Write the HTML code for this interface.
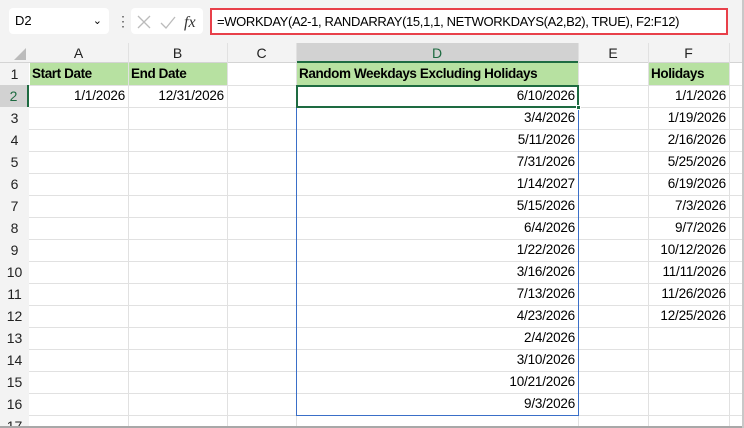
<!DOCTYPE html><html style="overflow:hidden"><head><style>
*{margin:0;padding:0;box-sizing:border-box}
html,body{width:744px;height:428px;overflow:hidden}
body{background:#fff;font-family:"Liberation Sans",Arial,sans-serif;position:relative}
.a{position:absolute}
.top{left:0;top:0;width:744px;height:43px;background:#f3f3f3}
.c{position:absolute;font-size:13.5px;line-height:22px;white-space:nowrap;letter-spacing:-0.2px}
.r{text-align:right;padding-right:3px}
.h{font-weight:bold;background:#b7e1a1;padding-left:2px;letter-spacing:-0.4px}
.hl{position:absolute;left:0;width:744px;height:1px;background:#e1e1e1}
.vl{position:absolute;top:43px;width:1px;height:383px;background:#e1e1e1}
.rh{position:absolute;left:0;width:29px;text-align:center;font-size:14px;line-height:22px;background:#f3f3f3;color:#222;overflow:hidden}
.ch{position:absolute;top:43px;height:20px;text-align:center;font-size:14px;line-height:20px;color:#222}
</style></head><body>
<div class="a top"></div>
<div class="a" style="left:9px;top:8px;width:100px;height:26px;background:#fff;border-radius:4px;font-size:13px;line-height:26px;padding-left:6px">D2<span style="position:absolute;right:7px;top:0;font-size:11px">&#8964;</span></div>
<div class="a" style="left:116px;top:13px;font-size:14px;color:#555">&#8942;</div>
<div class="a" style="left:131px;top:8px;width:72px;height:26px;background:#fff;border-radius:4px"></div>
<svg class="a" style="left:135px;top:13px" width="70" height="18"><path d="M3 3l12 12M15 3L3 15" stroke="#bbb" stroke-width="1.3" fill="none"/><path d="M26 10l5 5 9-11" stroke="#bbb" stroke-width="1.3" fill="none"/><text x="49" y="14" font-family="Liberation Serif" font-style="italic" font-size="16" fill="#333">fx</text></svg>
<div class="a" style="left:210px;top:8px;width:518px;height:27px;background:#fff;border:2px solid #e8404a;font-size:13px;line-height:23px;padding-left:5px;white-space:nowrap;overflow:hidden;letter-spacing:-0.35px">=WORKDAY(A2-1, RANDARRAY(15,1,1, NETWORKDAYS(A2,B2), TRUE), F2:F12)</div>
<div class="a" style="left:0;top:43px;width:744px;height:20px;background:#f3f3f3;border-bottom:1px solid #d4d4d4"></div>
<div class="a" style="left:0;top:63px;width:29px;height:363px;background:#f3f3f3;border-right:1px solid #d4d4d4"></div>
<div class="a" style="left:296px;top:43px;width:282px;height:20px;background:#d2d2d2;border-bottom:2px solid #1e6b41"></div>
<svg class="a" style="left:14px;top:48px" width="12" height="12"><path d="M12 0V12H0z" fill="#bbb"/></svg>
<div class="ch" style="left:29px;width:99px">A</div><div class="ch" style="left:128px;width:99px">B</div><div class="ch" style="left:227px;width:69px">C</div><div class="ch" style="left:296px;width:282px;color:#1e6b41">D</div><div class="ch" style="left:578px;width:70px">E</div><div class="ch" style="left:648px;width:81px">F</div>
<div id="g"></div>
<script>
let s='';
for(let i=1;i<=17;i++){let y=63+22*(i-1);let h=i==17?11:22;s+=`<div class="hl" style="top:${y+22}px;${i==17?'display:none':''}"></div><div class="rh" style="top:${y}px;height:${h}px;${i==2?'background:#d2d2d2;color:#1e6b41;border-right:2px solid #1e6b41':''}">${i}</div>`;}
[128,227,296,578,648,729].forEach(x=>s+=`<div class="vl" style="left:${x}px"></div>`);
const D=['6/10/2026','3/4/2026','5/11/2026','7/31/2026','1/14/2027','5/15/2026','6/4/2026','1/22/2026','3/16/2026','7/13/2026','4/23/2026','2/4/2026','3/10/2026','10/21/2026','9/3/2026'];
const F=['1/1/2026','1/19/2026','2/16/2026','5/25/2026','6/19/2026','7/3/2026','9/7/2026','10/12/2026','11/11/2026','11/26/2026','12/25/2026'];
D.forEach((t,i)=>s+=`<div class="c r" style="left:296px;width:282px;top:${85+22*i}px">${t}</div>`);
F.forEach((t,i)=>s+=`<div class="c r" style="left:648px;width:81px;top:${85+22*i}px">${t}</div>`);
document.getElementById('g').innerHTML=s;
</script>
<div class="c h" style="left:30px;width:98px;top:63px;height:22px">Start Date</div>
<div class="c h" style="left:129px;width:98px;top:63px;height:22px">End Date</div>
<div class="c h" style="left:297px;width:281px;top:63px;height:22px">Random Weekdays Excluding Holidays</div>
<div class="c h" style="left:649px;width:80px;top:63px;height:22px">Holidays</div>
<div class="c r" style="left:29px;width:99px;top:85px">1/1/2026</div>
<div class="c r" style="left:128px;width:99px;top:85px">12/31/2026</div>
<div class="a" style="left:296px;top:85px;width:283px;height:331px;border:1px solid #3a6fc8"></div>
<div class="a" style="left:296px;top:85px;width:283px;height:23px;border:2px solid #1e6b41"></div>
<div class="a" style="left:576px;top:105px;width:5px;height:5px;background:#1e6b41;border:1px solid #fff"></div>
<div class="a" style="left:0;top:426px;width:744px;height:2px;background:#a8a8a8"></div>
<div class="a" style="left:742px;top:0;width:2px;height:428px;background:#c8c8c8"></div>
</body></html>
